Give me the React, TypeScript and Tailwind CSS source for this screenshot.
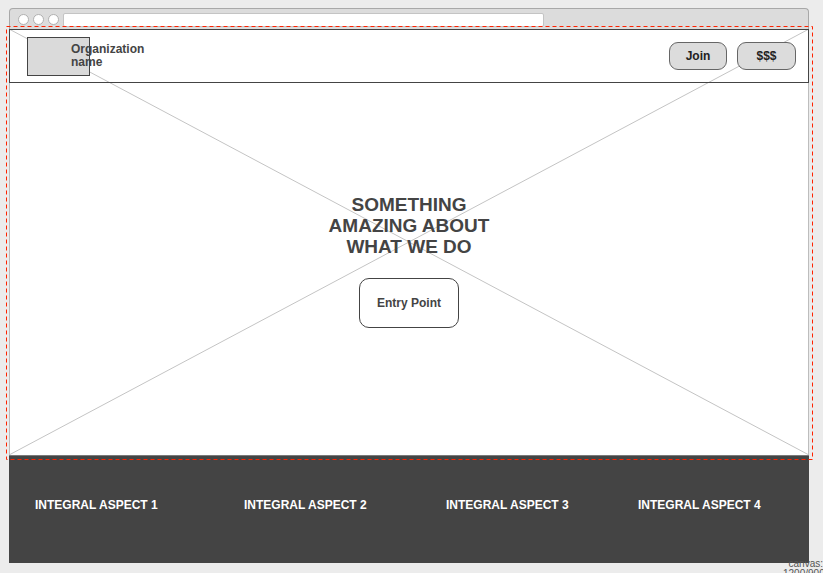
import React from "react";

export default function App() {
  const aspects = ["INTEGRAL ASPECT 1", "INTEGRAL ASPECT 2", "INTEGRAL ASPECT 3", "INTEGRAL ASPECT 4"];
  return (
    <div
      className="relative w-[823px] h-[573px] overflow-hidden bg-[#ececec]"
      style={{ fontFamily: '"Liberation Sans", Arial, sans-serif' }}
    >
      <div className="ml-[9px] pt-[8px] w-[800px] flex flex-col">
        {/* title bar */}
        <div className="h-[21px] bg-[#dcdcdc] border border-b-0 border-[#a8a8a8] rounded-t-[4px] flex items-center pl-[8px] gap-[4px]">
          <span className="w-[11px] h-[11px] rounded-full bg-white border border-[#b0b0b0]" />
          <span className="w-[11px] h-[11px] rounded-full bg-white border border-[#b0b0b0]" />
          <span className="w-[11px] h-[11px] rounded-full bg-white border border-[#b0b0b0]" />
          <span className="ml-[0px] w-[481px] h-[14px] bg-white border border-[#c4c4c4] rounded-[2px] self-end mb-[2px]" />
        </div>

        {/* header + hero */}
        <div className="relative flex flex-col bg-white">
          <svg className="absolute inset-0 w-full h-full pointer-events-none" viewBox="0 0 800 426" preserveAspectRatio="none">
            <line x1="0" y1="0" x2="800" y2="426" stroke="#c4c4c4" strokeWidth="1" />
            <line x1="800" y1="0" x2="0" y2="426" stroke="#c4c4c4" strokeWidth="1" />
          </svg>
          <header className="relative h-[54px] border border-[#444] flex items-center">
            <div className="ml-[17px] w-[63px] h-[39px] bg-[#dadada] border border-[#444] shrink-0" />
            <div className="ml-[-19px] relative text-[12px] leading-[13px] font-bold text-[#444] self-start mt-[13px]">
              Organization
              <br />
              name
            </div>
            <div className="ml-auto mr-[12px] flex gap-[10px]">
              <button className="w-[58px] h-[28px] rounded-[9px] border border-[#666] bg-[#dcdcdc] text-[12px] font-bold text-[#222]">
                Join
              </button>
              <button className="w-[59px] h-[28px] rounded-[9px] border border-[#666] bg-[#dcdcdc] text-[12px] font-bold text-[#222]">
                $$$
              </button>
            </div>
          </header>
          <section className="relative h-[372px] border-x border-[#bdbdbd] flex flex-col items-center pt-[111px]">
            <h1 className="text-[19px] leading-[21px] font-bold text-[#444] text-center w-[180px]">
              SOMETHING AMAZING ABOUT WHAT WE DO
            </h1>
            <button className="mt-[21px] w-[100px] h-[50px] rounded-[10px] border border-[#444] bg-white text-[12px] font-bold text-[#444]">
              Entry Point
            </button>
          </section>
        </div>

        {/* footer */}
        <footer className="h-[108px] bg-[#444] border-t border-[#7a7a7a] grid grid-cols-[209px_202px_192px_1fr] items-start pl-[26px] pt-[42px]">
          {aspects.map((a) => (
            <div key={a} className="text-[12px] leading-[14px] font-bold text-white whitespace-nowrap">
              {a}
            </div>
          ))}
        </footer>
      </div>

      {/* red dashed selection */}
      <svg className="absolute left-[6px] top-[26px] w-[807px] h-[434px] pointer-events-none" viewBox="0 0 807 434">
        <rect x="0.5" y="0.5" width="806" height="433" fill="none" stroke="#ff2200" strokeWidth="1" strokeDasharray="4 3" />
      </svg>

      {/* canvas label */}
      <div className="absolute left-[783px] top-[559px] w-[40px] text-right text-[10px] leading-[10px] text-[#555]">
        canvas:
        <br />
        1200/900
      </div>
    </div>
  );
}
